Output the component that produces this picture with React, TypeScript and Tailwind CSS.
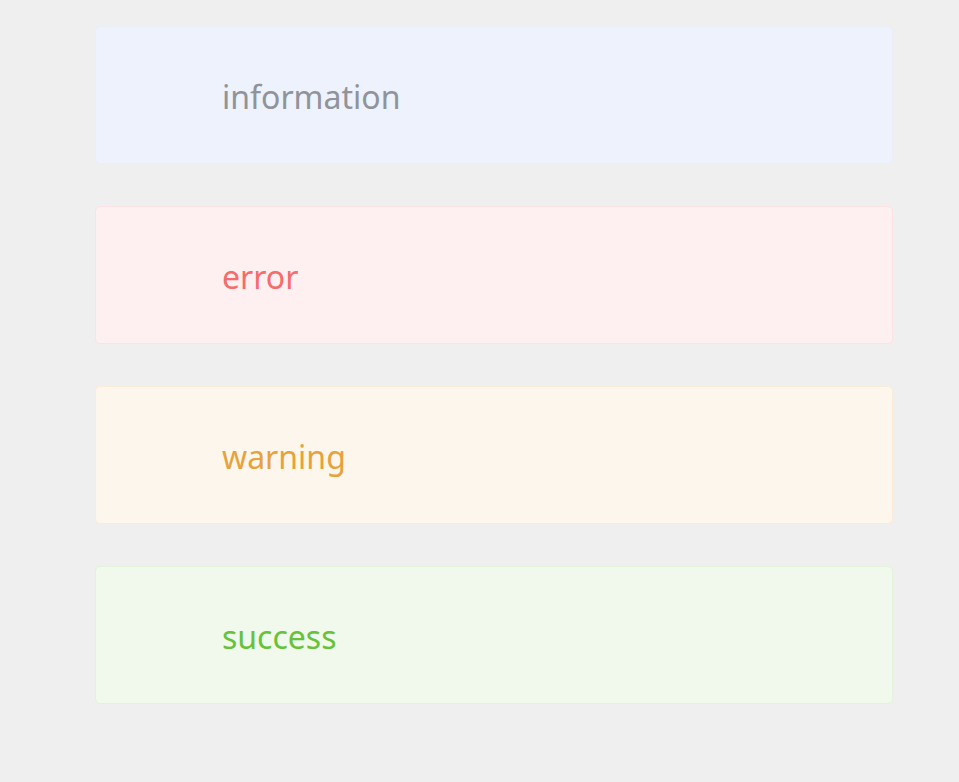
import React from 'react';

const ITEMS = [
  { label: 'information', box: 'bg-[#edf2fc] border-[#ebeef5]', text: 'text-[#909399]' },
  { label: 'error', box: 'bg-[#fef0f0] border-[#fde2e2]', text: 'text-[#f56c6c]' },
  { label: 'warning', box: 'bg-[#fdf6ec] border-[#faecd8]', text: 'text-[#e6a23c]' },
  { label: 'success', box: 'bg-[#f0f9eb] border-[#e1f3d8]', text: 'text-[#67c23a]' },
];

export default function App() {
  return (
    <div
      className="min-h-[782px] w-full bg-[#efefef] pt-[26px]"
      style={{ fontFamily: '"Noto Sans", "Open Sans", sans-serif' }}
    >
      <div className="ml-[95px] flex w-[798px] flex-col gap-[42px]">
        {ITEMS.map((item) => (
          <div
            key={item.label}
            className={`flex h-[138px] items-center rounded-[5px] border pl-[126px] pt-[3px] ${item.box}`}
          >
            <span className={`text-[32px] leading-none ${item.text}`}>{item.label}</span>
          </div>
        ))}
      </div>
    </div>
  );
}
